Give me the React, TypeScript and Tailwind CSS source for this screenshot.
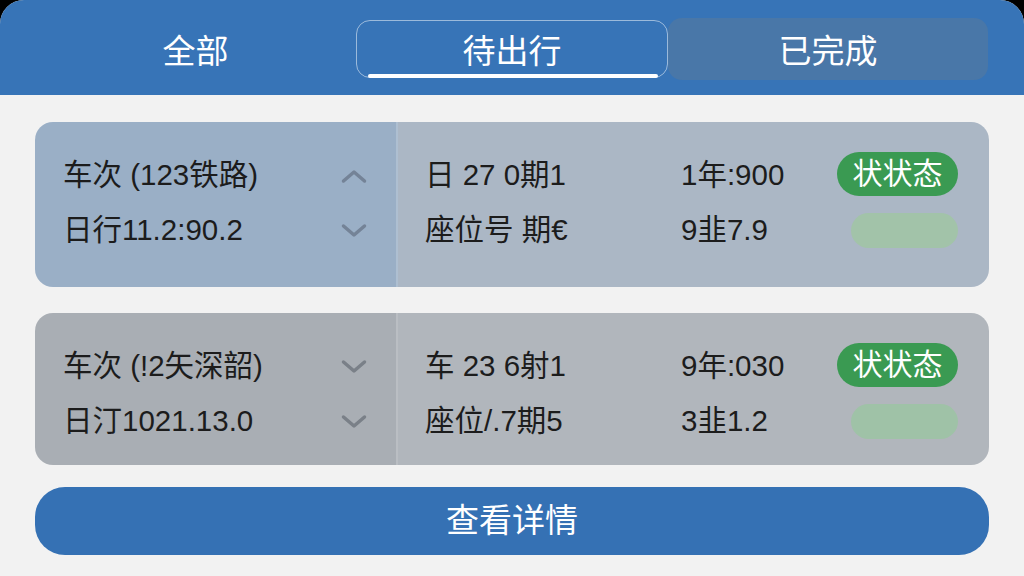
import React from "react";

const font = { fontFamily: '"Liberation Sans", "Noto Sans CJK SC", sans-serif' };

function ChevronUp({ color }: { color: string }) {
  return (
    <svg width="28" height="16" viewBox="0 0 28 16" fill="none">
      <path d="M3.5 13 L14 4 L24.5 13" stroke={color} strokeWidth="3.5" strokeLinecap="round" strokeLinejoin="round" />
    </svg>
  );
}
function ChevronDown({ color }: { color: string }) {
  return (
    <svg width="28" height="16" viewBox="0 0 28 16" fill="none">
      <path d="M3.5 3 L14 12 L24.5 3" stroke={color} strokeWidth="3.5" strokeLinecap="round" strokeLinejoin="round" />
    </svg>
  );
}

type CardProps = {
  h: string;
  leftBg: string;
  rightBg: string;
  chevron: string;
  l1: string;
  l2: string;
  up: boolean;
  r1a: string;
  r1b: string;
  r2a: string;
  r2b: string;
  pale: string;
};

function Card(p: CardProps) {
  return (
    <div className={`flex w-[954px] ${p.h} rounded-[18px] overflow-hidden`}>
      <div className={`w-[363px] ${p.leftBg} flex pl-[28px] pr-[28px] pt-[26px] border-r-2 border-white/20`}>
        <div className="flex-1 flex flex-col">
          <div className="h-[55px] flex items-center text-[29.5px] text-[#1c1c1c]">{p.l1}</div>
          <div className="h-[55px] flex items-center text-[29.5px] text-[#1c1c1c]">{p.l2}</div>
        </div>
        <div className="flex flex-col">
          <div className="h-[55px] flex items-center">{p.up ? <ChevronUp color={p.chevron} /> : <ChevronDown color={p.chevron} />}</div>
          <div className="h-[55px] flex items-center"><ChevronDown color={p.chevron} /></div>
        </div>
      </div>
      <div className={`flex-1 ${p.rightBg} pl-[27px] pr-[31px] pt-[26px] flex flex-col`}>
        <div className="h-[55px] flex items-center text-[29.5px] text-[#1c1c1c]">
          <div className="w-[256px]">{p.r1a}</div>
          <div className="flex-1">{p.r1b}</div>
          <div className="w-[121px] h-[44px] rounded-full bg-[#3a9a52] text-white text-[30px] flex items-center justify-center -mt-[4px]">状状态</div>
        </div>
        <div className="h-[55px] flex items-center text-[29.5px] text-[#1c1c1c]">
          <div className="w-[256px]">{p.r2a}</div>
          <div className="flex-1">{p.r2b}</div>
          <div className="w-[121px] flex justify-end">
            <div className={`w-[107px] h-[35px] rounded-full ${p.pale}`}></div>
          </div>
        </div>
      </div>
    </div>
  );
}

export default function App() {
  return (
    <div className="w-[1024px] h-[576px] bg-black" style={font}>
      <div className="w-full h-full bg-[#f2f2f2] rounded-t-[24px] overflow-hidden flex flex-col">
        <div className="h-[95px] bg-[#3774b7] flex items-center pl-[35px] pt-[2px] shrink-0">
          <div className="w-[321px] h-[58px] pt-[6px] flex items-center justify-center text-white text-[33px]">全部</div>
          <div className="relative w-[312px] h-[58px] pt-[6px] border border-white/50 rounded-[14px] flex items-center justify-center text-white text-[33px]">
            待出行
            <div className="absolute left-[11px] right-[9px] bottom-[-1px] h-[4px] rounded-full bg-white"></div>
          </div>
          <div className="w-[320px] h-[62px] pt-[6px] rounded-[14px] bg-[#4977a8] flex items-center justify-center text-white text-[33px]">已完成</div>
        </div>
        <div className="flex flex-col items-center pt-[27px]">
          <Card
            h="h-[165px]"
            leftBg="bg-[#9aafc6]"
            rightBg="bg-[#abb7c5]"
            chevron="#748397"
            l1="车次 (123铁路)"
            l2="日行11.2:90.2"
            up={true}
            r1a="日 27 0期1"
            r1b="1年:900"
            r2a="座位号 期€"
            r2b="9韭7.9"
            pale="bg-[#a2c3a9]"
          />
          <div className="h-[26px]"></div>
          <Card
            h="h-[152px]"
            leftBg="bg-[#a9aeb4]"
            rightBg="bg-[#b1b6bc]"
            chevron="#7a8088"
            l1="车次 (!2矢深韶)"
            l2="日汀1021.13.0"
            up={false}
            r1a="车 23 6射1"
            r1b="9年:030"
            r2a="座位/.7期5"
            r2b="3韭1.2"
            pale="bg-[#9fc2a7]"
          />
          <div className="h-[22px]"></div>
          <div className="w-[954px] h-[68px] rounded-[30px] bg-[#3571b4] flex items-center justify-center text-white text-[33px]">查看详情</div>
        </div>
      </div>
    </div>
  );
}
